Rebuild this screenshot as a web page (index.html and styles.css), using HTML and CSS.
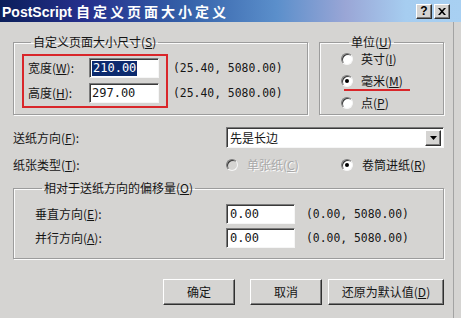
FILE: index.html
```html
<!DOCTYPE html>
<html lang="zh-CN">
<head>
    <meta charset="UTF-8">
    <title>PostScript 自定义页面大小定义</title>
    <link rel="stylesheet" href="styles.css">
</head>
<body>
    <div class="titlebar">
        <span class="title">PostScript <span class="title-cn">自定义页面大小定义</span></span>
        <div class="caption-btns">
            <span class="cap-btn help">?</span>
            <span class="cap-btn">
                <svg width="8" height="7" viewBox="0 0 8 7"><path d="M0 0h2l2 2.3L6 0h2L5 3.5 8 7H6L4 4.7 2 7H0l3-3.5z" fill="#000"/></svg>
            </span>
        </div>
    </div>

    <div class="content">
        <div class="top">
            <fieldset class="group size-group">
                <legend>自定义页面大小尺寸(<u>S</u>)</legend>
                <div class="size-body">
                    <div class="marked">
                        <div class="field-row">
                            <span class="label">宽度(<u>W</u>):</span>
                            <span class="input"><span class="sel">210.00</span></span>
                        </div>
                        <div class="field-row">
                            <span class="label">高度(<u>H</u>):</span>
                            <span class="input">297.00</span>
                        </div>
                    </div>
                    <div class="ranges">
                        <span>(25.40, 5080.00)</span>
                        <span>(25.40, 5080.00)</span>
                    </div>
                </div>
            </fieldset>

            <fieldset class="group unit-group">
                <legend>单位(<u>U</u>)</legend>
                <div class="radio-list">
                    <div class="radio-row"><span class="radio"></span><span>英寸(<u>I</u>)</span></div>
                    <div class="radio-row marked-line"><span class="radio checked"></span><span>毫米(<u>M</u>)</span></div>
                    <div class="radio-row"><span class="radio"></span><span>点(<u>P</u>)</span></div>
                </div>
            </fieldset>
        </div>

        <div class="line-row feed-row">
            <span class="row-label">送纸方向(<u>F</u>):</span>
            <div class="select">
                <span>先是长边</span>
                <span class="drop-btn">
                    <svg width="7" height="4" viewBox="0 0 7 4"><path d="M0 0h7L3.5 4z" fill="#000"/></svg>
                </span>
            </div>
        </div>

        <div class="line-row type-row">
            <span class="row-label">纸张类型(<u>T</u>):</span>
            <div class="radio-row disabled sheet"><span class="radio"></span><span>单张纸(<u>C</u>)</span></div>
            <div class="radio-row"><span class="radio checked"></span><span>卷筒进纸(<u>R</u>)</span></div>
        </div>

        <fieldset class="group offset-group">
            <legend>相对于送纸方向的偏移量(<u>O</u>)</legend>
            <div class="offset-body">
                <div class="offset-row">
                    <span class="offset-label">垂直方向(<u>E</u>):</span>
                    <span class="input short">0.00</span>
                    <span class="range">(0.00, 5080.00)</span>
                </div>
                <div class="offset-row">
                    <span class="offset-label">并行方向(<u>A</u>):</span>
                    <span class="input short">0.00</span>
                    <span class="range">(0.00, 5080.00)</span>
                </div>
            </div>
        </fieldset>

        <div class="buttons">
            <span class="btn ok">确定</span>
            <span class="btn cancel">取消</span>
            <span class="btn reset">还原为默认值(<u>D</u>)</span>
        </div>
    </div>
</body>
</html>
```

FILE: styles.css
```css
:root {
    --face: #d5d4d2;
    --shadow: #7b7b7b;
    --dark: #3a3a3a;
    --light: #f6f6f6;
    --text: #151515;
    --mark: #d9262a;
}

* {
    box-sizing: border-box;
    margin: 0;
    padding: 0;
}

body {
    width: 461px;
    height: 318px;
    overflow: hidden;
    background: var(--face);
    color: var(--text);
    font-family: "Noto Sans CJK SC", "Liberation Sans", sans-serif;
    font-size: 12px;
    line-height: 16px;
}

u { text-decoration: underline; text-underline-offset: 1px; }

/* title bar */
.titlebar {
    height: 22px;
    display: flex;
    align-items: center;
    padding: 0 11px 0 2px;
    background: linear-gradient(to right, #0b1f5a 0%, #252f8c 18%, #3460a8 40%, #5b8fcb 60%, #9aa6d6 75%, #a6cdf0 88%, #a8d0f2 100%);
    color: #fff;
}

.title {
    font-family: "Liberation Sans", "Noto Sans CJK SC", sans-serif;
    font-weight: bold;
    font-size: 14px;
    white-space: nowrap;
}

.title-cn {
    font-family: "Noto Sans CJK SC", sans-serif;
    letter-spacing: 3px;
}

.caption-btns {
    margin-left: auto;
    display: flex;
    gap: 2px;
}

.cap-btn {
    width: 16px;
    height: 15px;
    display: flex;
    align-items: center;
    justify-content: center;
    background: var(--face);
    border: 1px solid;
    border-color: #fff #303030 #303030 #fff;
    box-shadow: inset -1px -1px 0 var(--shadow);
    color: #000;
    font: bold 12px "Liberation Sans", sans-serif;
}

/* body */
.content {
    width: 454px;
    height: 296px;
    padding: 12px 9px 0 13px;
    border-right: 1px solid #a3a3a3;
}

.group {
    border: 1px solid #9c9c9c;
    box-shadow: inset 1px 1px 0 #fbfbfb, 1px 1px 0 #fbfbfb;
}

.group legend {
    padding: 0 2px;
    margin-left: 9px;
    line-height: 16px;
}

.top {
    display: flex;
    gap: 11px;
}

.size-group {
    width: 295px;
    padding: 4px 0 6px 8px;
}

.size-body {
    display: flex;
    gap: 5px;
}

.marked {
    width: 146px;
    border: 2px solid var(--mark);
    padding: 2px 6px 3px 2px;
    display: flex;
    flex-direction: column;
    gap: 5px;
}

.field-row {
    display: flex;
    align-items: center;
    height: 20px;
}

.label {
    width: 63px;
    padding-left: 2px;
}

.input {
    width: 70px;
    height: 20px;
    display: flex;
    align-items: center;
    padding-left: 2px;
    background: #fff;
    border: 1px solid;
    border-color: var(--shadow) var(--light) var(--light) var(--shadow);
    box-shadow: inset 1px 1px 0 var(--dark);
    font-family: "DejaVu Sans Mono", "Liberation Mono", monospace;
    font-size: 12px;
}

.sel {
    background: #0c2a6e;
    color: #fff;
    padding: 0 1px;
    line-height: 15px;
}

.ranges {
    display: flex;
    flex-direction: column;
    gap: 5px;
    padding-top: 4px;
}

.ranges span, .range {
    height: 20px;
    line-height: 20px;
    font-family: "DejaVu Sans Mono", "Liberation Mono", monospace;
    font-size: 11.4px;
    white-space: nowrap;
}

.unit-group {
    flex: 1;
    padding: 0 0 0 21px;
}

.unit-group legend {
    margin-left: 8px;
}

.radio-list {
    display: flex;
    flex-direction: column;
    gap: 4px;
}

.radio-row {
    display: flex;
    align-items: center;
    gap: 8px;
    height: 18px;
    position: relative;
    white-space: nowrap;
}

.radio {
    width: 12px;
    height: 12px;
    border-radius: 50%;
    background: #fff;
    border: 1px solid;
    border-color: var(--shadow) var(--light) var(--light) var(--shadow);
    box-shadow: inset 1px 1px 0 var(--dark);
    display: flex;
    align-items: center;
    justify-content: center;
    flex-shrink: 0;
}

.radio.checked::after {
    content: "";
    width: 4px;
    height: 4px;
    border-radius: 50%;
    background: #000;
}

.marked-line::after {
    content: "";
    position: absolute;
    left: 3px;
    bottom: -1px;
    width: 66px;
    height: 2px;
    background: var(--mark);
}

.radio-row.disabled {
    color: #a9a9a9;
    text-shadow: 1px 1px 0 #fbfbfb;
}

.radio-row.disabled .radio {
    background: var(--face);
}

/* single rows */
.line-row {
    display: flex;
    align-items: center;
}

.row-label {
    width: 213px;
}

.feed-row {
    margin-top: 12px;
    height: 21px;
}

.select {
    flex: 1;
    height: 21px;
    display: flex;
    align-items: center;
    padding: 0 2px 0 3px;
    background: #fff;
    border: 1px solid;
    border-color: var(--shadow) var(--light) var(--light) var(--shadow);
    box-shadow: inset 1px 1px 0 var(--dark);
}

.drop-btn {
    margin-left: auto;
    width: 16px;
    height: 16px;
    display: flex;
    align-items: center;
    justify-content: center;
    background: var(--face);
    border: 1px solid;
    border-color: #fff #303030 #303030 #fff;
    box-shadow: inset -1px -1px 0 var(--shadow);
}

.type-row {
    margin-top: 7px;
    height: 20px;
}

.type-row .radio-row {
    gap: 9px;
}

.sheet {
    width: 115px;
}

/* offset group */
.offset-group {
    margin-top: 5px;
    padding: 8px 0 10px 21px;
}

.offset-group legend {
    margin-left: 7px;
}

.offset-body {
    display: flex;
    flex-direction: column;
    gap: 4px;
}

.offset-row {
    display: flex;
    align-items: center;
    height: 20px;
}

.offset-label {
    width: 191px;
}

.input.short {
    width: 69px;
    padding-left: 3px;
}

.range {
    margin-left: 11px;
}

/* buttons */
.buttons {
    margin-top: 20px;
    display: flex;
    justify-content: flex-end;
}

.btn {
    height: 26px;
    display: flex;
    align-items: center;
    justify-content: center;
    background: var(--face);
    border: 1px solid;
    border-color: #fff #303030 #303030 #fff;
    box-shadow: inset -1px -1px 0 var(--shadow);
    white-space: nowrap;
}

.ok, .cancel {
    width: 72px;
}

.cancel {
    margin-left: 15px;
}

.reset {
    width: 116px;
    margin-left: 6px;
}
```
